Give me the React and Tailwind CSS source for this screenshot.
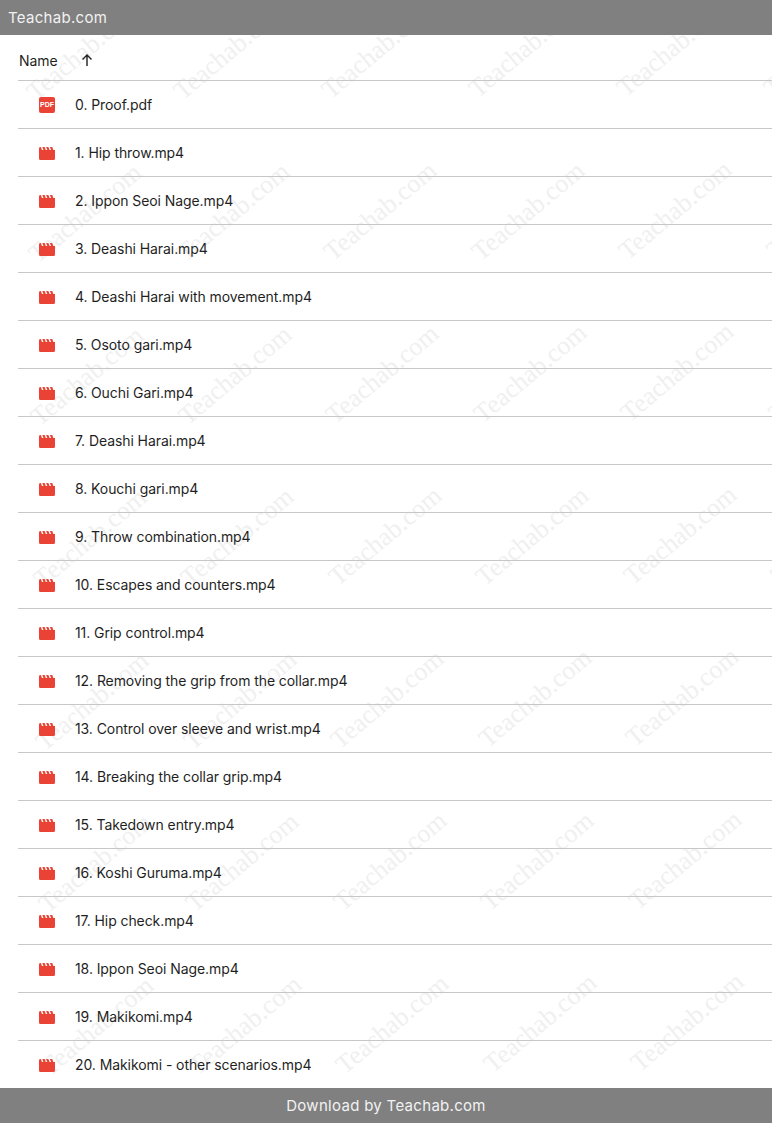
const rows = ["0. Proof.pdf","1. Hip throw.mp4","2. Ippon Seoi Nage.mp4","3. Deashi Harai.mp4","4. Deashi Harai with movement.mp4","5. Osoto gari.mp4","6. Ouchi Gari.mp4","7. Deashi Harai.mp4","8. Kouchi gari.mp4","9. Throw combination.mp4","10. Escapes and counters.mp4","11. Grip control.mp4","12. Removing the grip from the collar.mp4","13. Control over sleeve and wrist.mp4","14. Breaking the collar grip.mp4","15. Takedown entry.mp4","16. Koshi Guruma.mp4","17. Hip check.mp4","18. Ippon Seoi Nage.mp4","19. Makikomi.mp4","20. Makikomi - other scenarios.mp4"];
const marks = [];
for (let r = 0; r < 7; r++) for (let c = 0; c < 6; c++) marks.push({ x: 85 + c * 147.5 + (r - 1) * 2.4, y: 213 + (r - 1) * 162.5 - c * 0.8 });
function Clap() {
  return <svg width="16" height="13" viewBox="0 0 16 13" className="shrink-0 mt-[2px]"><path fill="#ea4335" d="M0 1.500C0 .7.7 0 1.500 0h.3L3 3h1.500L3.300 0h2.300l1.200 3h1.500L7.100 0h2.300l1.200 3h1.500L10.900 0h2.300l1.200 3H16v8.500a1.500 1.500 0 0 1-1.500 1.500h-13A1.500 1.500 0 0 1 0 11.500z"/></svg>;
}
function Pdf() {
  return <span className="w-4 h-4 shrink-0 rounded-[2px] bg-[#ea4335] text-white text-[7px] leading-none font-bold flex items-center justify-center font-['Liberation_Sans',sans-serif]">PDF</span>;
}
export default function App() {
  return <div className="relative w-[772px] h-[1123px] overflow-hidden bg-white font-['Inter',sans-serif] flex flex-col">
    <div className="absolute inset-x-0 top-[35px] bottom-[35px] overflow-hidden">
      {marks.map((m, i) => <span key={i} className="absolute text-[26px] whitespace-nowrap text-[#f0f0f0] font-['Liberation_Serif',serif] -rotate-[40deg] -translate-x-1/2 -translate-y-1/2" style={{ left: m.x, top: m.y - 35 }}>Teachab.com</span>)}
    </div>
    <div className="relative h-[35px] bg-[#808080] text-[#f2f2f2] text-[15px] tracking-[0.3px] pl-2 pt-[2px] flex items-center shrink-0">Teachab.com</div>
    <div className="relative flex-1 pl-[18px]">
      <div className="h-[46px] border-b border-[#c7c7c7] flex items-center pt-[6px] text-sm tracking-[-0.08px] text-[#1f1f1f]">
        <span className="ml-px">Name</span>
        <svg className="ml-[21px] -mt-[2px]" width="16" height="16" viewBox="0 0 16 16" fill="none" stroke="#1f1f1f" strokeWidth="1.4"><path d="M8 14V3M3.500 7.500 8 3l4.500 4.500"/></svg>
      </div>
      {rows.map((t, i) => <div key={t} className={"flex items-center pl-[21px] gap-5 text-sm tracking-[-0.08px] text-[#1f1f1f] " + (i < rows.length - 1 ? "h-12 border-b border-[#c7c7c7]" : "h-[47px]")}>
        {i === 0 ? <Pdf /> : <Clap />}<span>{t}</span>
      </div>)}
    </div>
    <div className="relative h-[35px] bg-[#808080] text-[#f2f2f2] text-[15px] tracking-[0.3px] pt-[2px] flex items-center justify-center shrink-0">Download by Teachab.com</div>
  </div>;
}
